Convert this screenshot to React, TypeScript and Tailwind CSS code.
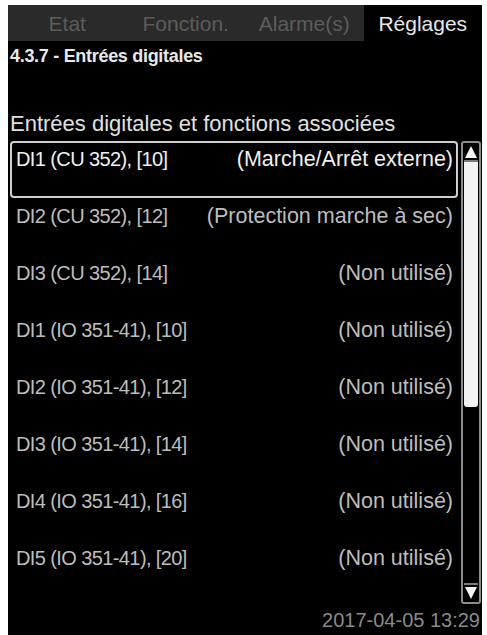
import React from "react";

const rows: [string, string][] = [
  ["DI1 (CU 352), [10]", "(Marche/Arrêt externe)"],
  ["DI2 (CU 352), [12]", "(Protection marche à sec)"],
  ["DI3 (CU 352), [14]", "(Non utilisé)"],
  ["DI1 (IO 351-41), [10]", "(Non utilisé)"],
  ["DI2 (IO 351-41), [12]", "(Non utilisé)"],
  ["DI3 (IO 351-41), [14]", "(Non utilisé)"],
  ["DI4 (IO 351-41), [16]", "(Non utilisé)"],
  ["DI5 (IO 351-41), [20]", "(Non utilisé)"],
];

export default function App() {
  return (
    <div
      className="w-[487px] h-[635px] bg-white pl-[8px] pr-[5px] pt-[5px] overflow-hidden"
      style={{ fontFamily: '"Liberation Sans", Arial, sans-serif' }}
    >
      <div className="w-full h-full bg-black flex flex-col">
        {/* Tabs */}
        <div className="grid grid-cols-4 h-[36px] text-[21px] leading-none">
          <div className="bg-[#2a2a2a] text-[#5c5c5c] flex items-center justify-center">Etat</div>
          <div className="bg-[#2a2a2a] text-[#5c5c5c] flex items-center justify-center">Fonction.</div>
          <div className="bg-[#2a2a2a] text-[#5c5c5c] flex items-center justify-center">Alarme(s)</div>
          <div className="bg-black text-[#e6e6e6] flex items-center justify-center">Réglages</div>
        </div>
        {/* Title */}
        <div className="h-[30px] pl-[2px] flex items-center text-[18px] font-bold tracking-[-0.3px] text-[#e8e8e8] leading-none">
          4.3.7 - Entrées digitales
        </div>
        <div className="h-[70px] pl-[2px] flex items-end pb-[6px] text-[22px] text-[#e0e0e0] leading-none">
          Entrées digitales et fonctions associées
        </div>
        {/* List */}
        <div className="flex pl-[2px] pr-[1px] gap-[3px]">
          <div className="flex-1 flex flex-col">
            {rows.map(([l, r], i) => (
              <div
                key={i}
                className={
                  "h-[57px] flex justify-between items-baseline pl-[4px] pr-[3px] pt-[5px] leading-[22px] " +
                  (i === 0
                    ? "border-2 border-[#cfcfcf] rounded-[4px] text-[#f0f0f0]"
                    : "border-2 border-transparent text-[#bdbdbd]")
                }
              >
                <span className="text-[20px] tracking-[-0.6px]">{l}</span>
                <span className="text-[21.5px]">{r}</span>
              </div>
            ))}
          </div>
          {/* Scrollbar */}
          <div className="w-[20px] h-[463px] border-2 border-[#8c8c8c] rounded-[3px] flex flex-col p-[1px]">
            <div className="h-[18px] flex items-center justify-center border-b-2 border-[#7a7a7a]">
              <svg width="12" height="12" viewBox="0 0 12 12">
                <polygon points="6,0 12,12 0,12" fill="#f5f5f5" />
              </svg>
            </div>
            <div className="h-[245px] bg-[#f2f2f2] rounded-b-[3px]" />
            <div className="flex-1" />
            <div className="h-[18px] flex items-center justify-center border-t-2 border-[#7a7a7a]">
              <svg width="12" height="12" viewBox="0 0 12 12">
                <polygon points="0,0 12,0 6,12" fill="#f5f5f5" />
              </svg>
            </div>
          </div>
        </div>
        {/* Date */}
        <div className="flex-1 flex items-center justify-end pr-[2px] text-[20px] text-[#8a8a8a] leading-none">
          2017-04-05 13:29
        </div>
      </div>
    </div>
  );
}
